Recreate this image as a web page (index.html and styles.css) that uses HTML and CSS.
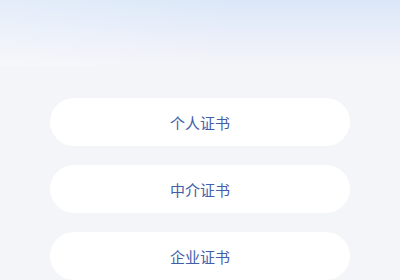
FILE: index.html
```html
<!DOCTYPE html>
<html lang="zh">
<head>
<meta charset="utf-8">
<link rel="stylesheet" href="styles.css">
</head>
<body>
<div class="page">
  <div class="list">
    <button class="item">个人证书</button>
    <button class="item">中介证书</button>
    <button class="item">企业证书</button>
  </div>
</div>
</body>
</html>
```
FILE: styles.css
```css
html, body {
  margin: 0;
  padding: 0;
  height: 100%;
}
body {
  background: #f4f5f9;
  font-family: "Noto Sans CJK SC", "Noto Sans", sans-serif;
}
.page {
  min-height: 100%;
  background:
    linear-gradient(90deg, rgba(255,255,255,0.25) 0%, rgba(255,255,255,0) 60%) top / 100% 66px no-repeat,
    linear-gradient(180deg, #dae7f8 0%, #e3ebf9 20px, #ebeff9 40px, #f0f2f9 55px, #f4f5f9 66px, #f4f5f9 100%);
}
.list {
  display: flex;
  flex-direction: column;
  align-items: center;
  gap: 19px;
  padding-top: 98px;
}
.item {
  width: 300px;
  height: 48px;
  border: none;
  border-radius: 24px;
  background: #ffffff;
  color: #4260aa;
  font-family: inherit;
  font-size: 15px;
  padding: 0;
  display: flex;
  align-items: center;
  justify-content: center;
}
```
